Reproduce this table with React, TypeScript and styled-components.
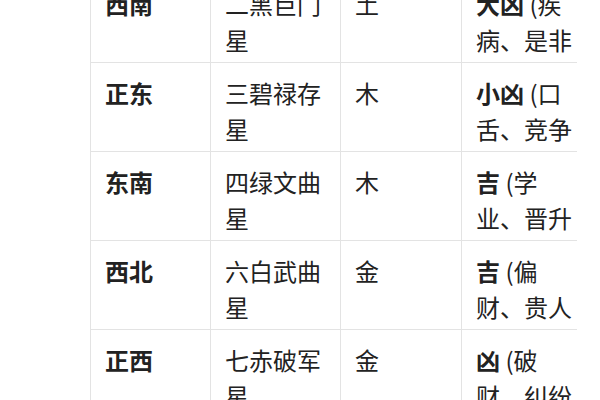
import styled, { createGlobalStyle } from 'styled-components'

const GlobalStyle = createGlobalStyle`
  html, body {
    margin: 0;
    padding: 0;
    background: #ffffff;
  }
`

type StarRow = {
  direction: string
  star: string[]
  element: string
  verdict: string
  note: string[]
}

const rows: StarRow[] = [
  { direction: '西南', star: ['二黑巨门', '星'], element: '土', verdict: '大凶', note: [' (疾', '病、是非'] },
  { direction: '正东', star: ['三碧禄存', '星'], element: '木', verdict: '小凶', note: [' (口', '舌、竞争'] },
  { direction: '东南', star: ['四绿文曲', '星'], element: '木', verdict: '吉', note: [' (学', '业、晋升'] },
  { direction: '西北', star: ['六白武曲', '星'], element: '金', verdict: '吉', note: [' (偏', '财、贵人'] },
  { direction: '正西', star: ['七赤破军', '星'], element: '金', verdict: '凶', note: [' (破', '财、纠纷'] },
]

const App = () => {
  return (
    <>
      <GlobalStyle />
      <Page>
        <Frame>
          <Table>
            <colgroup>
              <col style={{ width: 120 }} />
              <col style={{ width: 130 }} />
              <col style={{ width: 121 }} />
              <col style={{ width: 116 }} />
            </colgroup>
            <tbody>
              {rows.map((row) => (
                <Row key={row.direction}>
                  <Cell $bold>{row.direction}</Cell>
                  <Cell>
                    {row.star.map((line) => (
                      <Line key={line}>{line}</Line>
                    ))}
                  </Cell>
                  <Cell>{row.element}</Cell>
                  <Cell>
                    <Line>
                      <Verdict>{row.verdict}</Verdict>
                      {row.note[0]}
                    </Line>
                    <Line>{row.note[1]}</Line>
                  </Cell>
                </Row>
              ))}
            </tbody>
          </Table>
        </Frame>
      </Page>
    </>
  )
}

const Page = styled.div`
  width: 600px;
  height: 400px;
  overflow: hidden;
  background: #ffffff;
  padding-left: 90px;
  box-sizing: border-box;
`

const Frame = styled.div`
  width: 487px;
  overflow: hidden;
  margin-top: -26px;
`

const Table = styled.table`
  border-collapse: collapse;
  table-layout: fixed;
  width: 487px;
  font-family: 'Noto Sans CJK SC', 'Noto Sans', sans-serif;
  font-size: 24px;
  line-height: 36px;
  color: #222222;
`

const Row = styled.tr`
  border-bottom: 1px solid #e3e3e3;
`

const Cell = styled.td<{ $bold?: boolean }>`
  vertical-align: top;
  padding: 12px 0 4px 14px;
  border-left: 1px solid #e3e3e3;
  font-weight: ${(p) => (p.$bold ? 700 : 400)};
  white-space: nowrap;
  overflow: hidden;
`

const Line = styled.span`
  display: block;
`

const Verdict = styled.strong`
  font-weight: 700;
`

export default App
